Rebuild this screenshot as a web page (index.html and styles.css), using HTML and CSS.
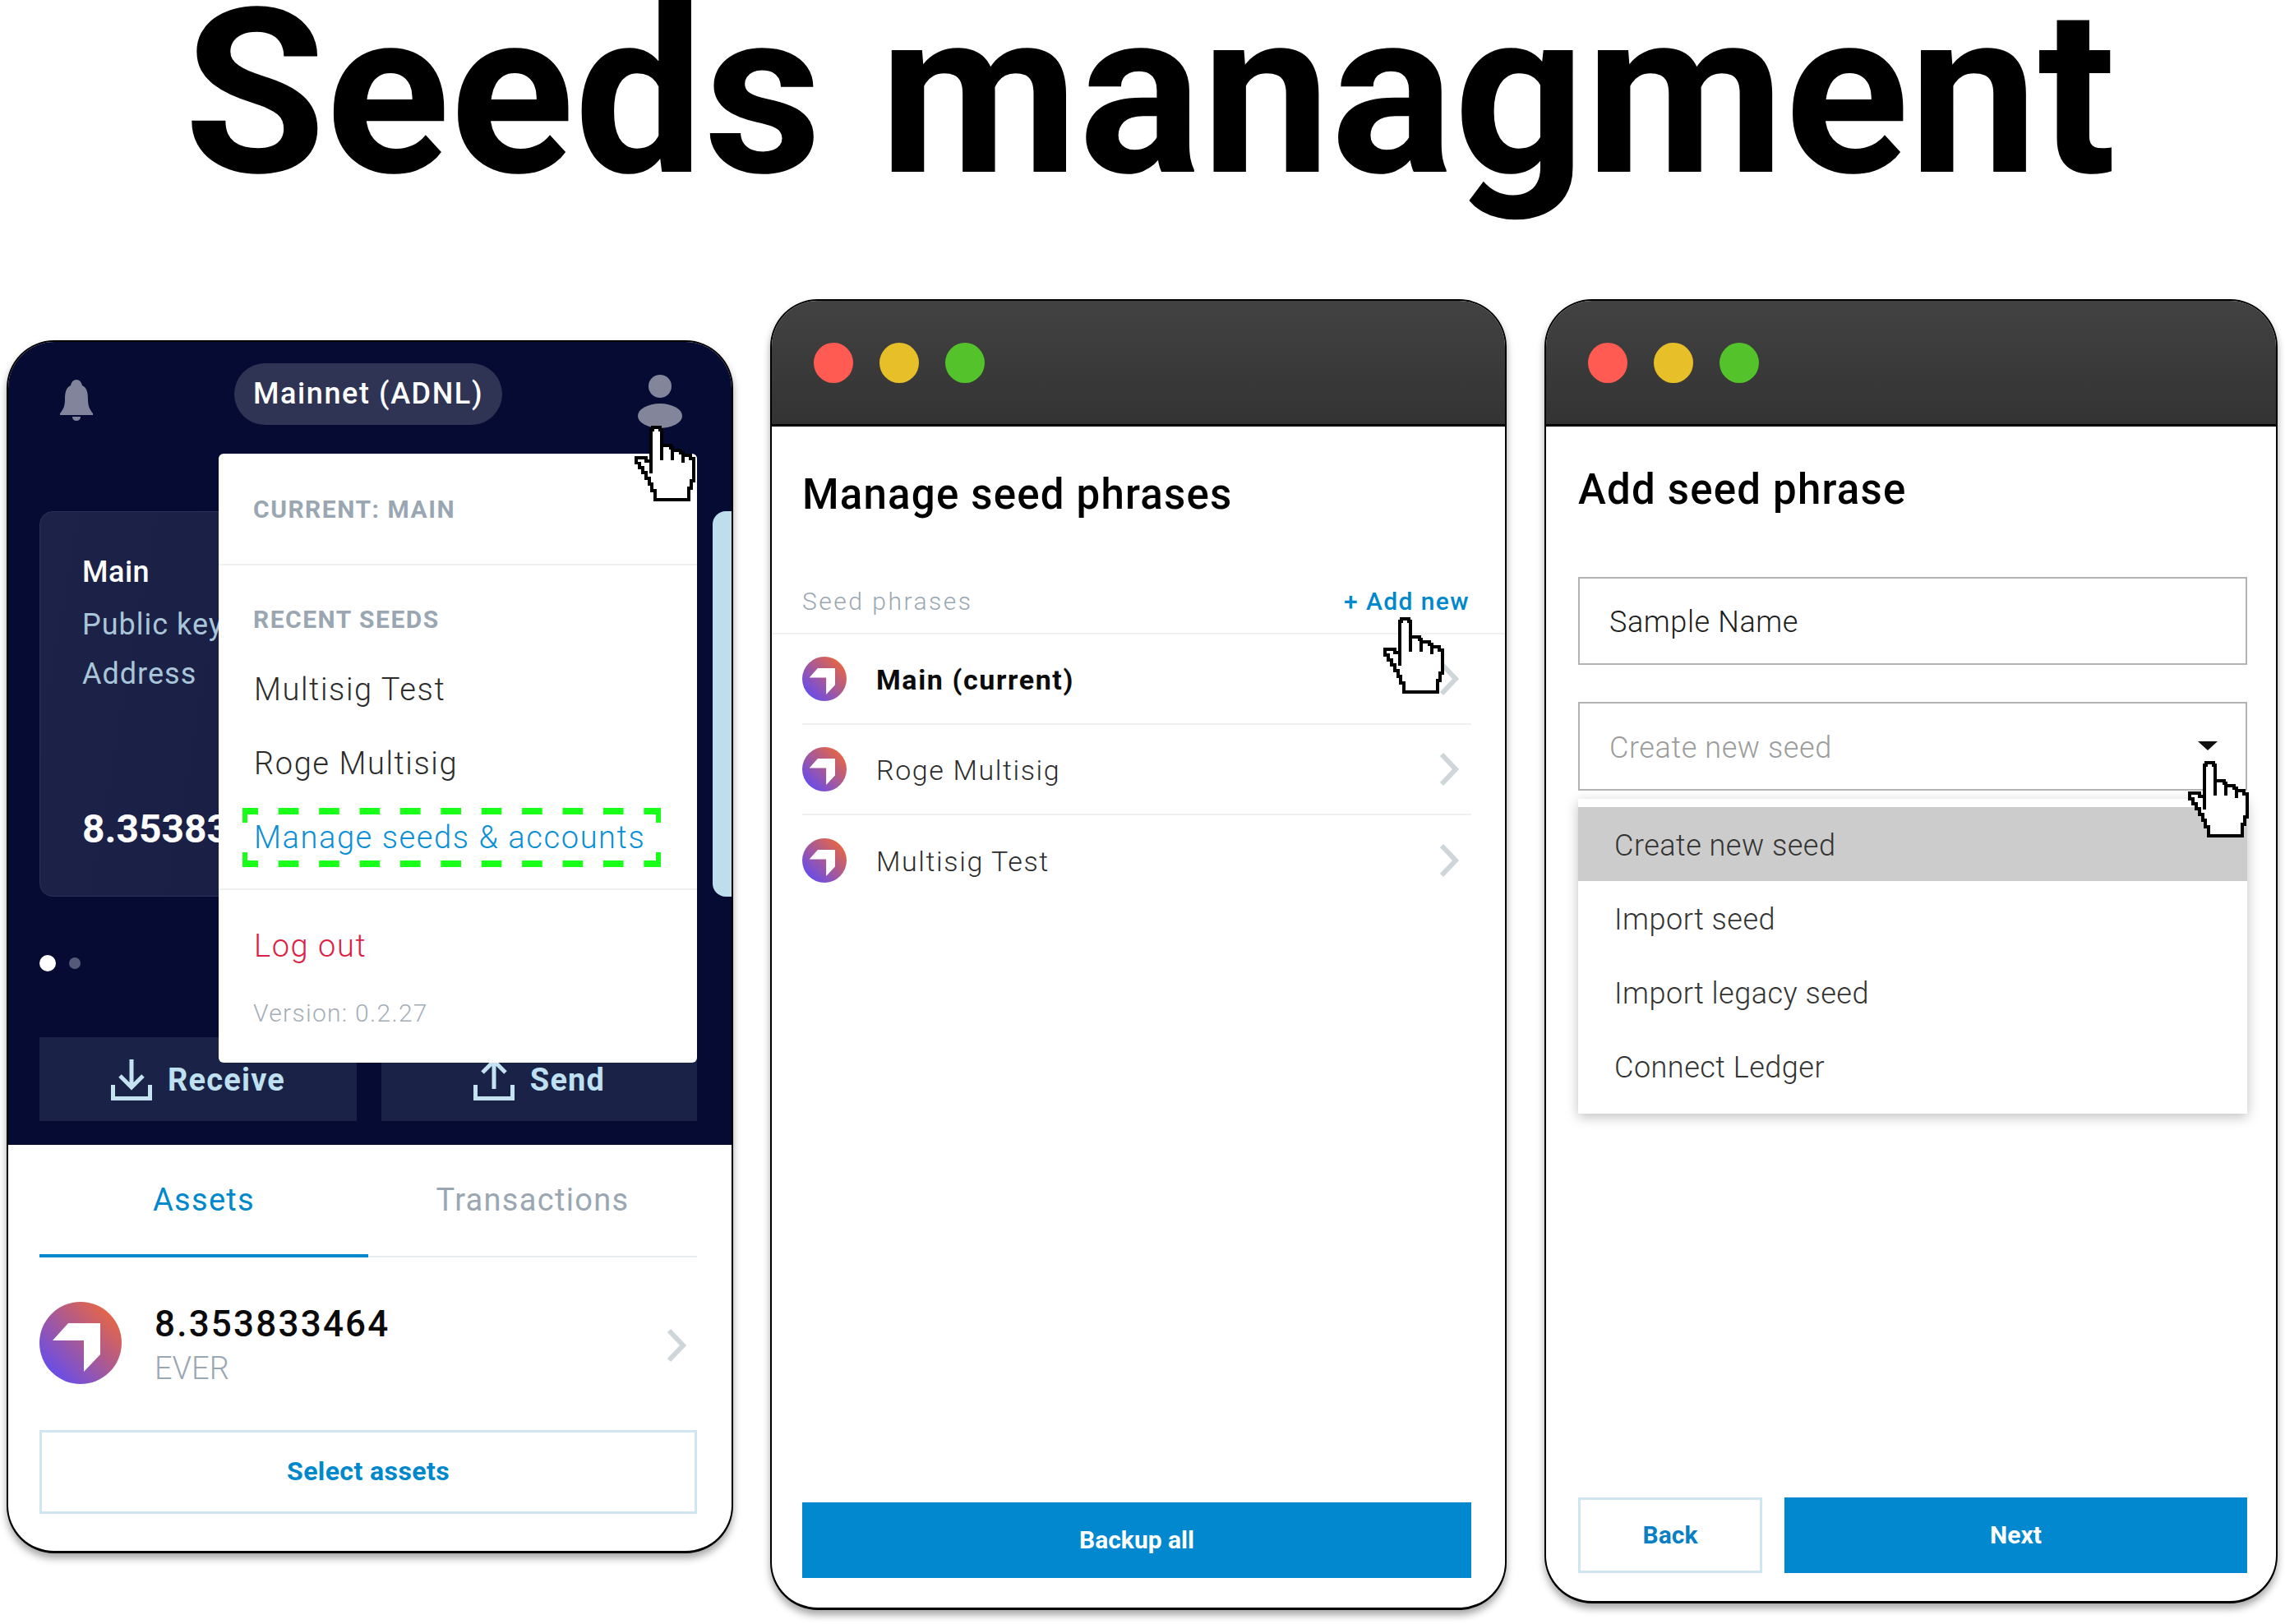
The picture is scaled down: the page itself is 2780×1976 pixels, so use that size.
FILE: index.html
```html
<!DOCTYPE html>
<html lang="en">
<head>
    <meta charset="UTF-8">
    <meta name="viewport" content="width=device-width, initial-scale=1.0">
    <title>Seeds managment</title>
    <link rel="stylesheet" href="styles.css">
</head>
<body>
    <!-- shared icons -->
    <svg class="defs" width="0" height="0">
        <defs>
            <linearGradient id="logoGrad" x1="0.15" y1="0.85" x2="0.85" y2="0.15">
                <stop offset="0" stop-color="#6b4de6"/>
                <stop offset="1" stop-color="#e2654a"/>
            </linearGradient>
            <symbol id="logo" viewBox="0 0 100 100">
                <circle cx="50" cy="50" r="50" fill="url(#logoGrad)"/>
                <polygon points="16,47 35,26 74,26 74,64 54,85 54,47" fill="#fff"/>
            </symbol>
            <symbol id="chevron" viewBox="0 0 24 42">
                <path d="M3 3 L20 21 L3 39" fill="none" stroke="#cfd6da" stroke-width="6"/>
            </symbol>
            <symbol id="hand" viewBox="0 0 74 93">
                <path d="M22 2 H31 V5 H33 V24 H44 V27 H46 V30 H56 V33 H59 V36 H68 V40 H72 V68 H69 V77 H66 V91 H25 V80 H21 V72 H18 V65 H14 V58 H10 V52 H6 V46 H2 V39 H14 V43 H20 V5 H22 Z" fill="#fff" stroke="#000" stroke-width="4" shape-rendering="crispEdges"/>
                <path d="M20 43 V59 M33 24 V42 M46 30 V42 M59 36 V45" fill="none" stroke="#000" stroke-width="4" shape-rendering="crispEdges"/>
            </symbol>
        </defs>
    </svg>

    <h1 class="titulo">Seeds managment</h1>

    <div class="paineis">

        <!-- wallet popup -->
        <div class="painel telefone">
            <div class="topo">
                <div class="barra">
                    <svg class="sino" width="40" height="50" viewBox="0 0 40 50">
                        <path d="M20 0 C24 0 26 3 27 7 C33 10 34 16 34 24 C34 32 36 36 40 41 V43 H0 V41 C4 36 6 32 6 24 C6 16 7 10 13 7 C14 3 16 0 20 0 Z M15 45 H25 C25 48 23 50 20 50 C17 50 15 48 15 45 Z" fill="#81849a"/>
                    </svg>
                    <div class="rede">Mainnet (ADNL)</div>
                    <svg class="usuario" width="54" height="65" viewBox="0 0 54 65">
                        <ellipse cx="27" cy="14" rx="14" ry="14" fill="#83869b"/>
                        <ellipse cx="27" cy="50" rx="27" ry="15" fill="#83869b"/>
                    </svg>
                </div>

                <div class="carrossel">
                    <div class="cartao">
                        <p class="cartao-nome">Main</p>
                        <p class="cartao-linha">Public key</p>
                        <p class="cartao-linha cartao-linha2">Address</p>
                        <p class="cartao-valor">8.353833464</p>
                    </div>
                    <div class="cartao-prox"></div>
                </div>

                <div class="pontos">
                    <span class="ponto ativo"></span>
                    <span class="ponto"></span>
                </div>

                <div class="acoes">
                    <div class="acao acao-receber">
                        <svg width="50" height="50" viewBox="0 0 50 50">
                            <path d="M2.5 31 V47.5 H47.5 V31 M25 0 V34 M11 20 L25 34 L39 20" fill="none" stroke="#c4e2f0" stroke-width="5"/>
                        </svg>
                        Receive
                    </div>
                    <div class="acao acao-enviar">
                        <svg width="50" height="50" viewBox="0 0 50 50">
                            <path d="M2.5 31 V47.5 H47.5 V31 M25 36 V2 M11 16 L25 2 L39 16" fill="none" stroke="#c4e2f0" stroke-width="5"/>
                        </svg>
                        Send
                    </div>
                </div>
            </div>

            <div class="abas">
                <div class="aba ativa">Assets</div>
                <div class="aba">Transactions</div>
            </div>

            <div class="ativo-linha">
                <svg class="ativo-logo" width="100" height="100"><use href="#logo"/></svg>
                <div class="ativo-texto">
                    <div class="ativo-valor">8.353833464</div>
                    <div class="ativo-moeda">EVER</div>
                </div>
                <svg class="ativo-seta" width="24" height="42"><use href="#chevron"/></svg>
            </div>

            <div class="selecionar">Select assets</div>

            <!-- menu aberto por cima do conteudo -->
            <div class="menu">
                <div class="menu-cabecalho">
                    <p class="menu-titulo">CURRENT: MAIN</p>
                </div>
                <p class="menu-titulo menu-recentes">RECENT SEEDS</p>
                <p class="menu-item">Multisig Test</p>
                <p class="menu-item">Roge Multisig</p>
                <p class="menu-item menu-gerenciar">Manage seeds &amp; accounts</p>
                <div class="menu-divisor"></div>
                <p class="menu-item menu-sair">Log out</p>
                <p class="menu-versao">Version: 0.2.27</p>
                <svg class="tracejado" width="509" height="72">
                    <path d="M0 4 H509 M0 68 H509" fill="none" stroke="#1aff1a" stroke-width="8" stroke-dasharray="24.7 24.7" stroke-dashoffset="5.7"/>
                    <path d="M3 0 V18 M506 0 V18 M3 54 V72 M506 54 V72" fill="none" stroke="#1aff1a" stroke-width="6"/>
                </svg>
            </div>
            <svg class="mao mao-usuario" width="78" height="92"><use href="#hand"/></svg>
        </div>

        <!-- manage seeds window -->
        <div class="painel janela janela-gerenciar">
            <div class="janela-topo">
                <span class="luz vermelha"></span>
                <span class="luz amarela"></span>
                <span class="luz verde"></span>
            </div>
            <h2 class="janela-titulo">Manage seed phrases</h2>
            <div class="secao">
                <span class="secao-nome">Seed phrases</span>
                <span class="secao-add">+ Add new</span>
            </div>
            <div class="seed">
                <svg width="54" height="54"><use href="#logo"/></svg>
                <span class="seed-nome atual">Main (current)</span>
                <svg class="seed-seta" width="26" height="42"><use href="#chevron"/></svg>
            </div>
            <div class="seed">
                <svg width="54" height="54"><use href="#logo"/></svg>
                <span class="seed-nome">Roge Multisig</span>
                <svg class="seed-seta" width="26" height="42"><use href="#chevron"/></svg>
            </div>
            <div class="seed seed-ultima">
                <svg width="54" height="54"><use href="#logo"/></svg>
                <span class="seed-nome">Multisig Test</span>
                <svg class="seed-seta" width="26" height="42"><use href="#chevron"/></svg>
            </div>
            <div class="botoes botoes-gerenciar">
                <div class="botao primario">Backup all</div>
            </div>
            <svg class="mao mao-add" width="74" height="93"><use href="#hand"/></svg>
        </div>

        <!-- add seed window -->
        <div class="painel janela janela-adicionar">
            <div class="janela-topo">
                <span class="luz vermelha"></span>
                <span class="luz amarela"></span>
                <span class="luz verde"></span>
            </div>
            <div class="formulario">
                <h2 class="janela-titulo form-titulo">Add seed phrase</h2>
                <div class="campo campo-nome">Sample Name</div>
                <div class="campo campo-select">
                    Create new seed
                    <span class="seta-baixo"></span>
                </div>
                <div class="lista">
                    <div class="lista-item selecionado">Create new seed</div>
                    <div class="lista-item">Import seed</div>
                    <div class="lista-item">Import legacy seed</div>
                    <div class="lista-item">Connect Ledger</div>
                </div>
            </div>
            <div class="botoes botoes-adicionar">
                <div class="botao secundario">Back</div>
                <div class="botao primario">Next</div>
            </div>
            <svg class="mao mao-select" width="74" height="93"><use href="#hand"/></svg>
        </div>
    </div>
</body>
</html>
```

FILE: styles.css
```css
* {
    box-sizing: border-box;
}

html, body {
    margin: 0;
    height: 1976px;
    overflow: hidden;
    background-color: #fff;
    font-family: Roboto, "Liberation Sans", sans-serif;
}

p {
    margin: 0;
}

.defs {
    position: absolute;
}

.titulo {
    margin: 0;
    height: 364px;
    padding-left: 18px;
    font-size: 280px;
    font-weight: 700;
    line-height: 227px;
    text-align: center;
    color: #000;
}

.paineis {
    display: flex;
    align-items: flex-start;
    padding-left: 8px;
}

.painel {
    position: relative;
    background-color: #fff;
    border: 2px solid #000;
    border-bottom-width: 3px;
    border-radius: 58px;
    overflow: hidden;
    box-shadow: 0 6px 10px rgba(0, 0, 0, 0.35);
}

.mao {
    position: absolute;
    z-index: 5;
}

/* wallet popup */
.telefone {
    width: 884px;
    height: 1476px;
    margin-top: 50px;
}

.topo {
    height: 977px;
    padding-top: 26px;
    background-color: #060b33;
}

.barra {
    display: flex;
    align-items: flex-start;
    height: 75px;
    padding-left: 63px;
}

.sino {
    margin-top: 20px;
}

.rede {
    width: 326px;
    height: 75px;
    margin-left: 172px;
    border-radius: 38px;
    background-color: #2f3354;
    color: #fff;
    font-size: 36px;
    font-weight: 500;
    letter-spacing: 1.6px;
    line-height: 74px;
    text-align: center;
}

.usuario {
    margin-left: 165px;
    margin-top: 14px;
}

.carrossel {
    display: flex;
    margin-top: 105px;
    padding-left: 38px;
}

.cartao {
    width: 782px;
    height: 469px;
    padding: 50px 0 0 51px;
    border: 1px solid #2a3056;
    border-radius: 16px;
    background: linear-gradient(100deg, #1d2248, #141a40);
    color: #fff;
}

.cartao-nome {
    font-size: 36px;
    font-weight: 500;
    letter-spacing: 0.5px;
    line-height: 46px;
}

.cartao-linha {
    margin-top: 18px;
    color: #a9c6d8;
    font-size: 36px;
    letter-spacing: 1px;
    line-height: 46px;
}

.cartao-linha2 {
    margin-top: 14px;
}

.cartao-valor {
    margin-top: 136px;
    font-size: 48px;
    font-weight: 700;
    line-height: 60px;
}

.cartao-prox {
    width: 23px;
    height: 469px;
    margin-left: 38px;
    border-radius: 16px 0 0 16px;
    background-color: #bfdeec;
}

.pontos {
    display: flex;
    align-items: center;
    gap: 16px;
    height: 20px;
    margin-top: 71px;
    padding-left: 38px;
}

.ponto {
    width: 14px;
    height: 14px;
    border-radius: 50%;
    background-color: #555a78;
}

.ponto.ativo {
    width: 20px;
    height: 20px;
    background-color: #fff;
}

.acoes {
    display: flex;
    gap: 30px;
    margin-top: 80px;
    padding-left: 38px;
}

.acao {
    display: flex;
    align-items: center;
    justify-content: center;
    gap: 19px;
    height: 102px;
    padding-top: 1px;
    background-color: #1a2347;
    color: #bfe0f0;
    font-size: 38px;
    font-weight: 700;
    letter-spacing: 1.2px;
}

.acao-receber {
    width: 386px;
}

.acao-enviar {
    width: 384px;
}

.abas {
    display: flex;
    padding-left: 38px;
}

.aba {
    width: 400px;
    height: 137px;
    padding-top: 37px;
    border-bottom: 2px solid #e8ecef;
    color: #9aa7b2;
    font-size: 38px;
    letter-spacing: 1.3px;
    line-height: 60px;
    text-align: center;
}

.aba.ativa {
    border-bottom: 4px solid #0088cc;
    color: #0088cc;
}

.ativo-linha {
    display: flex;
    align-items: center;
    margin-top: 52px;
    padding-left: 38px;
}

.ativo-logo {
    margin-bottom: 6px;
}

.ativo-texto {
    margin-top: 2px;
    margin-left: 40px;
}

.ativo-valor {
    color: #0b0b0b;
    font-size: 44px;
    font-weight: 500;
    letter-spacing: 2.2px;
    line-height: 54px;
}

.ativo-moeda {
    color: #9aa7b2;
    font-size: 38px;
    font-weight: 300;
    line-height: 54px;
}

.ativo-seta {
    margin-left: auto;
    margin-right: 55px;
}

.selecionar {
    width: 800px;
    height: 102px;
    margin: 48px 0 0 38px;
    border: 3px solid #cfe6f2;
    color: #0088cc;
    font-size: 32px;
    font-weight: 700;
    letter-spacing: 0.4px;
    line-height: 94px;
    text-align: center;
}

.menu {
    position: absolute;
    left: 256px;
    top: 136px;
    width: 582px;
    height: 741px;
    border-radius: 6px;
    background-color: #fff;
}

.menu-cabecalho {
    height: 136px;
    padding-top: 48px;
    border-bottom: 2px solid #eef0f2;
}

.menu-titulo {
    padding-left: 42px;
    color: #9aa7b2;
    font-size: 30px;
    font-weight: 700;
    letter-spacing: 1.5px;
    line-height: 40px;
}

.menu-recentes {
    margin-top: 46px;
}

.menu-item {
    margin-top: 40px;
    padding-left: 43px;
    color: #2c2c2c;
    font-size: 38px;
    font-weight: 300;
    letter-spacing: 1.6px;
    line-height: 50px;
}

.menu-gerenciar {
    color: #0a8fd6;
}

.menu-divisor {
    height: 2px;
    margin-top: 37px;
    background-color: #eef0f2;
}

.menu-sair {
    margin-top: 43px;
    color: #dc1f46;
}

.menu-versao {
    margin-top: 37px;
    padding-left: 42px;
    color: #a5aeb6;
    font-size: 30px;
    font-weight: 300;
    letter-spacing: 1.3px;
    line-height: 40px;
}

.tracejado {
    position: absolute;
    left: 29px;
    top: 431px;
}

.mao-usuario {
    left: 760px;
    top: 102px;
}

/* app windows */
.janela {
    display: flex;
    flex-direction: column;
}

.janela-gerenciar {
    width: 896px;
    height: 1595px;
    margin-left: 45px;
}

.janela-adicionar {
    width: 892px;
    height: 1587px;
    margin-left: 46px;
}

.janela-topo {
    display: flex;
    align-items: center;
    gap: 32px;
    flex: none;
    height: 153px;
    padding-left: 51px;
    border-bottom: 3px solid #000;
    background: linear-gradient(#424242, #333);
}

.luz {
    width: 48px;
    height: 49px;
    border-radius: 50%;
}

.vermelha {
    background-color: #ff5b52;
}

.amarela {
    background-color: #e6bf29;
}

.verde {
    background-color: #53c22b;
}

.janela-titulo {
    margin: 53px 0 0 37px;
    color: #000;
    font-size: 51px;
    font-weight: 500;
    letter-spacing: 1.2px;
    line-height: 60px;
}

.secao {
    display: flex;
    justify-content: space-between;
    margin-top: 80px;
    padding: 0 43px 18px 37px;
    border-bottom: 2px solid #eef0f2;
    font-size: 30px;
    line-height: 40px;
}

.secao-nome {
    color: #9aa7b2;
    font-weight: 300;
    letter-spacing: 2.5px;
}

.secao-add {
    color: #0088cc;
    font-weight: 500;
    letter-spacing: 1.4px;
}

.seed {
    display: flex;
    align-items: center;
    flex: none;
    height: 110px;
    margin: 0 41px 0 37px;
    border-bottom: 2px solid #eef0f2;
}

.seed-ultima {
    border-bottom: none;
}

.seed-nome {
    margin-left: 36px;
    padding-top: 2px;
    color: #2c2c2c;
    font-size: 34px;
    font-weight: 300;
    letter-spacing: 1.6px;
}

.seed-nome.atual {
    color: #0b0b0b;
    font-weight: 700;
}

.seed-seta {
    margin-left: auto;
    margin-right: 14px;
}

.botoes {
    display: flex;
    margin-top: auto;
}

.botoes-gerenciar {
    margin: auto 41px 36px 37px;
}

.botoes-adicionar {
    gap: 27px;
    margin: auto 35px 34px 39px;
}

.botao {
    height: 92px;
    font-size: 30px;
    font-weight: 700;
    line-height: 92px;
    text-align: center;
}

.primario {
    flex: 1;
    background-color: #0288cf;
    color: #fff;
}

.secundario {
    width: 224px;
    border: 3px solid #cfe6f2;
    color: #0a7fc4;
    line-height: 86px;
}

.formulario {
    padding: 0 35px 0 39px;
}

.form-titulo {
    margin: 47px 0 0;
}

.campo {
    position: relative;
    padding-left: 36px;
    border: 2px solid #b3b3b3;
    font-size: 36px;
    font-weight: 300;
    letter-spacing: 0.6px;
}

.campo-nome {
    height: 107px;
    margin-top: 76px;
    color: #1c1c1c;
    line-height: 107px;
}

.campo-select {
    height: 108px;
    margin-top: 45px;
    color: #9c9c9c;
    line-height: 108px;
}

.seta-baixo {
    position: absolute;
    right: 34px;
    top: 46px;
    border-top: 11px solid #111;
    border-left: 12px solid transparent;
    border-right: 12px solid transparent;
}

.lista {
    height: 383px;
    margin-top: 10px;
    padding-top: 10px;
    background-color: #fff;
    box-shadow: 0 4px 14px rgba(0, 0, 0, 0.25);
}

.lista-item {
    height: 90px;
    padding-left: 44px;
    color: #333;
    font-size: 36px;
    font-weight: 300;
    letter-spacing: 0.5px;
    line-height: 94px;
}

.lista-item.selecionado {
    background-color: #ccc;
}

.mao-add {
    left: 744px;
    top: 385px;
}

.mao-select {
    left: 781px;
    top: 560px;
}
```
